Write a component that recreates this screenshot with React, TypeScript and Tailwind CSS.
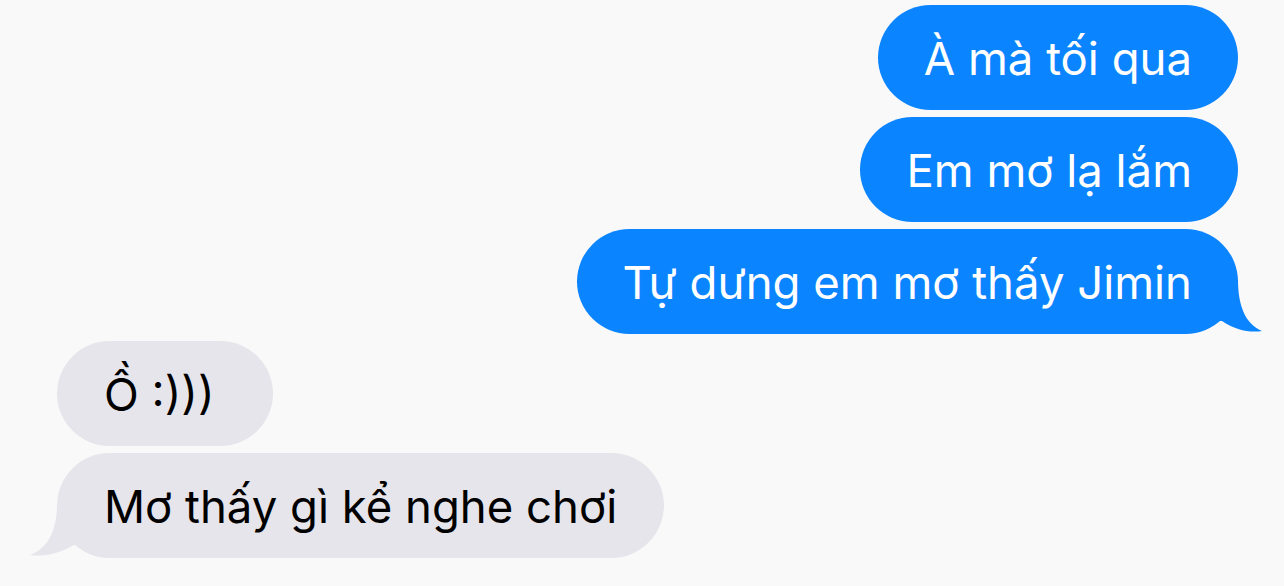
import React from "react";

type Msg = { text: string; me: boolean; tail?: boolean };

const messages: Msg[] = [
  { text: "À mà tối qua", me: true },
  { text: "Em mơ lạ lắm", me: true },
  { text: "Tự dưng em mơ thấy Jimin", me: true, tail: true },
  { text: "Ồ :)))", me: false },
  { text: "Mơ thấy gì kể nghe chơi", me: false, tail: true },
];

const Bubble = ({ text, me, tail }: Msg) => {
  return (
    <div className={me ? "flex justify-end" : "flex justify-start"}>
      <div
        className={
          me
            ? "relative h-[105px] flex items-center rounded-full bg-[#0b84ff] px-[46px] text-white"
            : "relative h-[105px] min-w-[216px] flex items-center rounded-full bg-[#e6e5eb] px-[47px] text-black"
        }
      >
        {tail && me && (
          <svg
            className="absolute right-[-26px] top-[51px]"
            width="64"
            height="56"
            viewBox="0 0 64 56"
          >
            <path
              d="M0 0 H38 C38 25 45 44 62 51 C50 53 35 50 22 41 H0 Z"
              fill="#0b84ff"
            />
          </svg>
        )}
        {tail && !me && (
          <svg
            className="absolute left-[-27px] top-[51px]"
            width="64"
            height="56"
            viewBox="0 0 64 56"
          >
            <path
              d="M64 0 H27 C27 25 19 44 0 51 C12 53 29 50 44 41 H64 Z"
              fill="#e6e5eb"
            />
          </svg>
        )}
        <span className="relative top-[1px] text-[45.5px] leading-none whitespace-nowrap">
          {text}
        </span>
      </div>
    </div>
  );
};

export default function App() {
  return (
    <div
      className="w-[1284px] h-[586px] overflow-hidden bg-[#f9f9f9] flex flex-col gap-[7px] pt-[5px] pl-[57px] pr-[46px]"
      style={{ fontFamily: "Inter, 'Noto Sans', sans-serif" }}
    >
      {messages.map((m, i) => (
        <Bubble key={i} {...m} />
      ))}
    </div>
  );
}
